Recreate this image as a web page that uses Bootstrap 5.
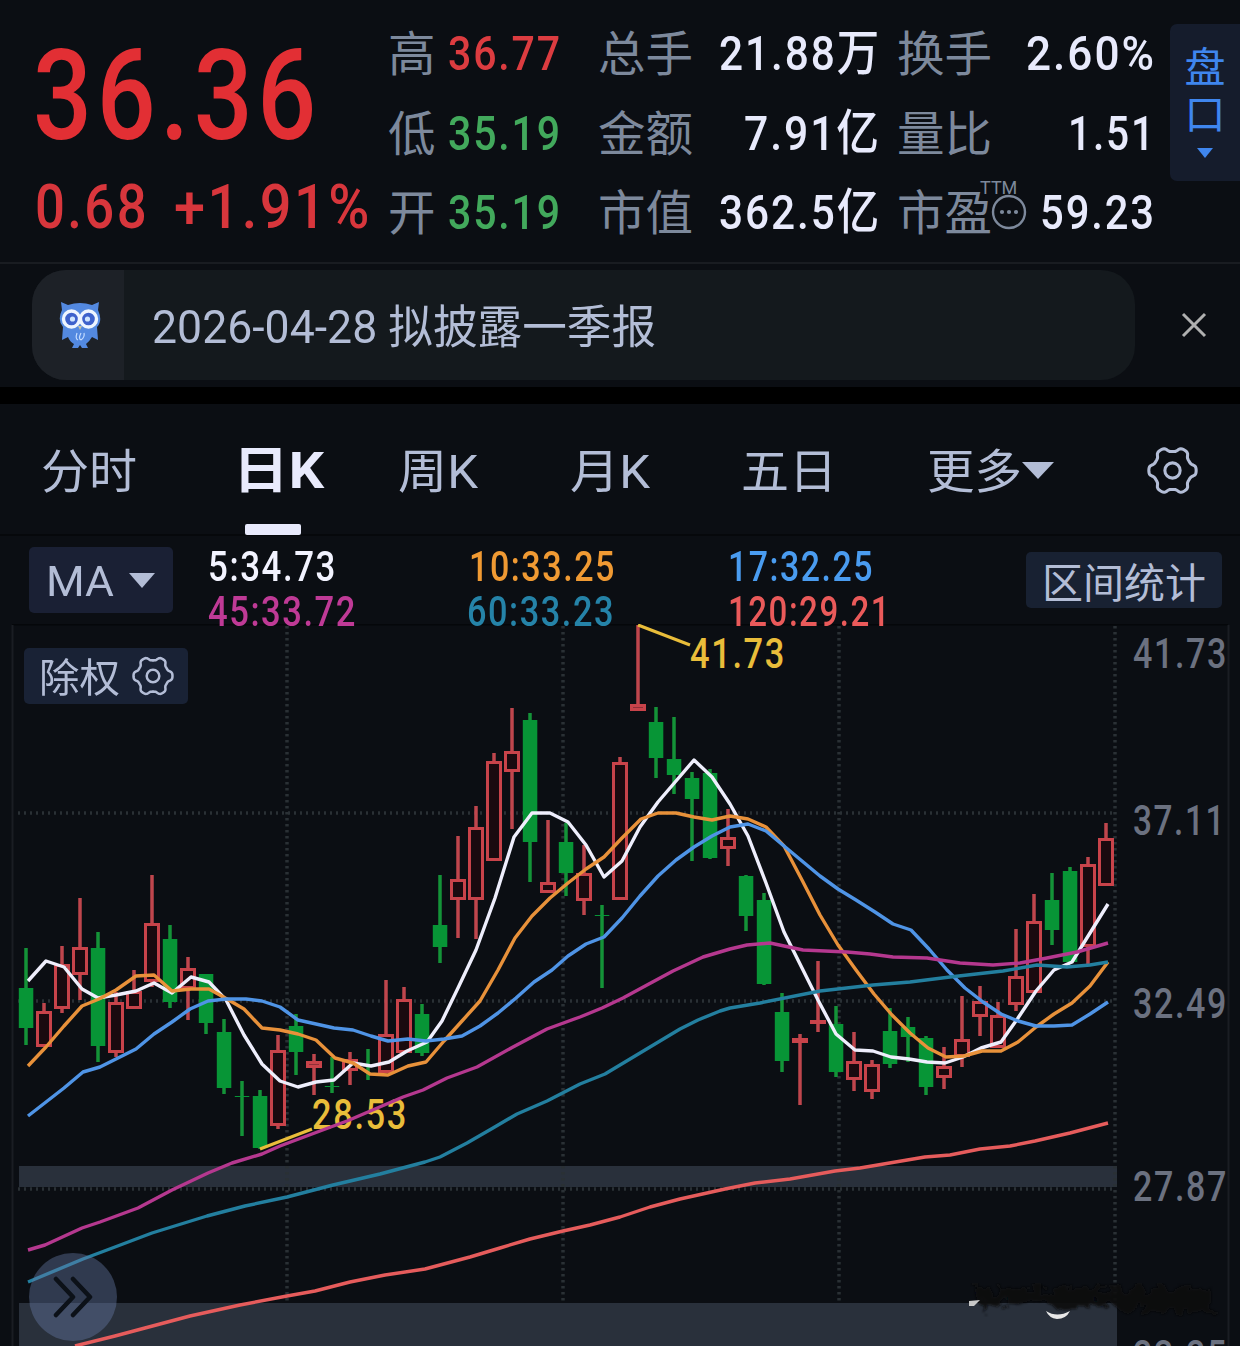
<!DOCTYPE html>
<html lang="zh-CN">
<head>
<meta charset="utf-8">
<meta name="viewport" content="width=device-width, initial-scale=1">
<title>日K</title>
<link rel="stylesheet" href="https://cdn.jsdelivr.net/npm/bootstrap@5.3.0/dist/css/bootstrap.min.css">
<style>
:root{--num:Roboto,"Noto Sans CJK SC",sans-serif;--ink:#e8eafc;--soft:#b3bdd6;--lbl:#7d899c;--up:#e22f34;--down:#42a95c}
body{width:1240px;height:1346px;margin:0;overflow:hidden;background:#0b0e13;color:var(--ink);font-family:var(--num);line-height:1}
.fit{display:inline-block;white-space:nowrap;transform-origin:0 50%}
.price-col .fit,.stat-col .fit,.ma-vals .fit{letter-spacing:.045em}
.quote{height:264px;border-bottom:2px solid #191c21}
.price-col{width:389px;padding:25px 0 0 33px}
.price-now{font-size:126px;line-height:142px;font-weight:500;color:var(--up)}
.price-chg{font-size:62px;line-height:80px;color:#d8363c;font-weight:500;padding-left:2px}
.price-chg .gap-chg{width:25px}
.stat-col{padding-top:14px}
.stat-row{height:79.5px;font-size:49px;font-weight:500}
.stat-row>span{flex-shrink:0}
.stat-row .lbl{font-size:47.5px;font-weight:400;color:var(--lbl);padding-top:4px}
.c1{width:60px}.c2{width:150px}.c3{width:118px}.c4{width:165px}.c5{width:145px}.c6{width:130px}
.stat-col .c1{margin-left:-1px}
.red{color:#dc3c40}.green{color:#42a95c}
.ttm{left:83px;top:-12px;font-size:18px;color:var(--lbl);font-weight:400}
.dots{left:94px;top:3px}
.side-tab{width:70px;height:157px;margin-top:24px;background:#151c2c;border-radius:7px 0 0 7px;color:#3f86ee;font-size:41px;padding-top:21px}
.side-tab span{line-height:47px}
.notice{height:123px;padding:6px 0 0 32px}
.pill{width:1103px;height:110px;border-radius:34px;background:#14191d;overflow:hidden}
.pill-ico{width:92px;padding-left:3px;background:#1d2127}
.pill-txt{font-size:46px;color:var(--soft);padding:4px 0 0 28px}
.close-x{width:105px;padding:0 0 8px 13px}
.divide{height:17px;background:#000}
.tabs{height:132px;font-size:47px;color:var(--soft);border-bottom:2px solid #06080b}
.tabs .tab{height:132px;padding-top:2px}
.t1{margin-left:41px}.t2{margin-left:96px}.t3{margin-left:74px}.t4{margin-left:92px}.t5{margin-left:91px}.t6{margin-left:90px}
.t7{margin-right:42px}
.tabs .t7{padding-top:0}
.tab.on{color:var(--ink);font-weight:700;font-size:50px}
.tab.on::after{content:"";position:absolute;left:12px;top:120px;width:56px;height:11px;background:var(--ink);border-radius:2px}
.ma-bar{height:88px;padding-left:29px;z-index:1}
.box-btn{background:#1a2034;border-radius:5px;color:var(--soft)}
.ma-btn{width:144px;height:66px;margin-top:11px;font-size:42px;padding-left:17px}
.ma-btn .fit{padding-top:4px}
.ma-btn svg{margin-left:15px}
.ma-vals{margin-left:35px;padding-top:8px;font-size:42px;font-weight:500}
.ma-vals .ma-line{height:45px;line-height:45px}
.v1{width:261px}.v2{width:259px}
.range-btn{width:196px;height:56px;margin:16px 18px 0 auto;padding-top:8px;font-size:41px;background:#182132}
.chart{height:722px}
.chart svg.plot{display:block}
.ex-btn{left:24px;top:24px;width:164px;height:56px;font-size:40px;background:#192235;padding-left:15px;gap:12px}
.ex-btn .fit{padding-top:6px}
.more-btn{left:29px;top:629px;width:88px;height:88px;border-radius:50%;background:rgba(105,125,170,.4)}
.plot text{font-family:var(--num);font-weight:500;font-size:42px;letter-spacing:2px}
</style>
</head>
<body>
<header class="quote d-flex">
  <div class="price-col flex-shrink-0">
    <div class="price-now"><span class="fit" data-w="288">36.36</span></div>
    <div class="price-chg d-flex"><span class="fit" data-w="114">0.68</span><span class="gap-chg"></span><span class="fit" data-w="198">+1.91%</span></div>
  </div>
  <div class="stat-col flex-shrink-0">
    <div class="stat-row d-flex align-items-center"><span class="c1 lbl">高</span><span class="c2 red"><span class="fit" data-w="114">36.77</span></span><span class="c3 lbl">总手</span><span class="c4 text-end"><span class="fit" data-w="162">21.88万</span></span><span class="c5 lbl ps-3">换手</span><span class="c6 text-end"><span class="fit" data-w="130">2.60%</span></span></div>
    <div class="stat-row d-flex align-items-center"><span class="c1 lbl">低</span><span class="c2 green"><span class="fit" data-w="114">35.19</span></span><span class="c3 lbl">金额</span><span class="c4 text-end"><span class="fit" data-w="137">7.91亿</span></span><span class="c5 lbl ps-3">量比</span><span class="c6 text-end"><span class="fit" data-w="88">1.51</span></span></div>
    <div class="stat-row d-flex align-items-center"><span class="c1 lbl">开</span><span class="c2 green"><span class="fit" data-w="114">35.19</span></span><span class="c3 lbl">市值</span><span class="c4 text-end"><span class="fit" data-w="162">362.5亿</span></span><span class="c5 lbl ps-3"><span class="position-relative d-inline-block">市盈<span class="ttm position-absolute">TTM</span><svg class="dots position-absolute" width="36" height="36" viewBox="0 0 36 36"><circle cx="18" cy="18" r="16" fill="none" stroke="#7d899c" stroke-width="2.4"/><g fill="#7d899c"><circle cx="11" cy="18" r="2.1"/><circle cx="18" cy="18" r="2.1"/><circle cx="25" cy="18" r="2.1"/></g></svg></span></span><span class="c6 text-end"><span class="fit" data-w="116">59.23</span></span></div>
  </div>
  <div class="side-tab ms-auto d-flex flex-column align-items-center"><span>盘</span><span>口</span><svg class="mt-2" width="16" height="12"><path d="M0 1H16L8 11Z" fill="#3f86ee"/></svg></div>
</header>

<section class="notice d-flex">
  <div class="pill d-flex">
    <div class="pill-ico d-flex align-items-center justify-content-center">
      <svg width="44" height="48" viewBox="0 0 44 48">
        <path d="M3 1 10 4Q22 0 34 4L41 1 40 9Q45 20 39 26L40 39 34 36Q31 41 28 43L30 47H24L22 44 20 47H14L16 43Q12 41 10 36L4 39 5 26Q-1 19 4 9Z" fill="#5389e0"/>
        <circle cx="13.500" cy="18" r="8" fill="#3d62cc" stroke="#edf5ff" stroke-width="3.400"/><circle cx="30.500" cy="18" r="8" fill="#3d62cc" stroke="#edf5ff" stroke-width="3.400"/>
        <circle cx="14.500" cy="18" r="2.600" fill="#cfe6ff"/><circle cx="29.500" cy="18" r="2.600" fill="#cfe6ff"/>
        <path d="M20 25H24L22 29Z" fill="#c6c6a8"/><path d="M19 32Q17 38 20 39M23 32Q20 38 23 39M26 32Q27 36 23 39" fill="none" stroke="#c4dcff" stroke-width="1.200"/>
      </svg>
    </div>
    <div class="pill-txt d-flex align-items-center"><span class="fit" data-w="504">2026-04-28 拟披露一季报</span></div>
  </div>
  <div class="close-x d-flex align-items-center justify-content-center"><svg width="26" height="26" viewBox="0 0 26 26"><path d="M2 2 24 24M24 2 2 24" stroke="#b0b0b0" stroke-width="3" fill="none"/></svg></div>
</section>
<div class="divide"></div>

<nav class="tabs d-flex">
  <div class="tab t1 d-flex align-items-center"><span class="fit" data-w="96">分时</span></div>
  <div class="tab t2 on position-relative d-flex align-items-center"><span class="fit" data-w="91">日K</span></div>
  <div class="tab t3 d-flex align-items-center"><span class="fit" data-w="80">周K</span></div>
  <div class="tab t4 d-flex align-items-center"><span class="fit" data-w="80">月K</span></div>
  <div class="tab t5 d-flex align-items-center"><span class="fit" data-w="96">五日</span></div>
  <div class="tab t6 d-flex align-items-center"><span class="fit" data-w="95">更多</span><svg width="32" height="18"><path d="M0 0H32L16 17Z" fill="#b3bdd6"/></svg></div>
  <div class="tab t7 d-flex align-items-center ms-auto"><svg width="51" height="51" viewBox="-25 -25 50 50"><use href="#gear"/></svg></div>
</nav>

<section class="ma-bar position-relative d-flex">
  <div class="ma-btn box-btn d-flex align-items-center"><span class="fit" data-w="68">MA</span><svg width="26" height="15"><path d="M0 0H26L13 15Z" fill="#b3bdd6"/></svg></div>
  <div class="ma-vals">
    <div class="ma-line d-flex"><span class="v1" style="color:#f2f3ff"><span class="fit" data-w="129">5:34.73</span></span><span class="v2" style="color:#f09a33"><span class="fit" data-w="147">10:33.25</span></span><span style="color:#4a9cf0"><span class="fit" data-w="146">17:32.25</span></span></div>
    <div class="ma-line d-flex"><span class="v2" style="color:#bf3a96"><span class="fit" data-w="149">45:33.72</span></span><span class="v1" style="color:#2583a8"><span class="fit" data-w="148">60:33.23</span></span><span style="color:#ea5a5a"><span class="fit" data-w="163">120:29.21</span></span></div>
  </div>
  <div class="range-btn box-btn d-flex align-items-center justify-content-center"><span class="fit" data-w="164">区间统计</span></div>
</section>

<main class="chart position-relative">
  <svg class="plot" id="plot" width="1240" height="722" viewBox="0 624 1240 722">
    <defs>
      <g id="gear" fill="none" stroke="#b3bdd6" stroke-width="3" stroke-linejoin="round"><path id="gearPath"/><circle r="7.500"/></g>
      <filter id="soft" x="-5%" y="-20%" width="110%" height="140%"><feTurbulence type="fractalNoise" baseFrequency=".09" numOctaves="3" seed="4" result="n"/><feDisplacementMap in="SourceGraphic" in2="n" scale="26"/><feGaussianBlur stdDeviation="1.2"/></filter>
    </defs>
    <path d="M12 624.500H1228" stroke="#05070a" stroke-width="2"/><path d="M12.500 625V1346M1228.500 625V1346" stroke="#1a1d23" stroke-width="2"/>
    <path d="M19 1166H1117V1187H19ZM19 1303H1117V1346H19Z" fill="#29303b"/>
    <path d="M287 626V1302M563 626V1302M839 626V1302M1115 626V1302" stroke="#2a3035" stroke-width="3.500" stroke-dasharray="2.500 3.500"/>
    <path d="M18 813H1116M18 1001H1116M18 1189H1116" stroke="#2a3035" stroke-width="3.500" stroke-dasharray="2 4"/>
    <g id="candles"></g>
    <g fill="#e9bd3a"><text x="690" y="668" textLength="96" lengthAdjust="spacingAndGlyphs">41.73</text><text x="312" y="1129" textLength="96" lengthAdjust="spacingAndGlyphs">28.53</text></g>
    <g id="lines" fill="none" stroke-width="3.400" stroke-linejoin="round"></g>
    <path d="M638 625 690 645M260 1149 312 1129" stroke="#e9bd3a" stroke-width="3.200"/>
    <g fill="#6b7180"><text x="1133" y="668" textLength="95" lengthAdjust="spacingAndGlyphs">41.73</text><text x="1133" y="835" textLength="93" lengthAdjust="spacingAndGlyphs">37.11</text><text x="1133" y="1018" textLength="95" lengthAdjust="spacingAndGlyphs">32.49</text><text x="1133" y="1201" textLength="95" lengthAdjust="spacingAndGlyphs">27.87</text><text x="1133" y="1370" textLength="95" lengthAdjust="spacingAndGlyphs">23.25</text></g>
    <path filter="url(#soft)" d="M974 1288H1212V1312H1122L1112 1304 1068 1306 1060 1312 1048 1303 990 1304 980 1310Z" fill="#0b0c0e" opacity=".9"/>
    <path d="M1046 1311Q1057 1318 1070 1311 1066 1319 1057 1319 1049 1318 1046 1311Z" fill="#e8e8e8"/><path d="M969 1301 980 1300 974 1306 969 1306Z" fill="#c8c8c8"/>
  </svg>
  <div class="ex-btn box-btn position-absolute d-flex align-items-center"><span class="fit" data-w="81">除权</span><svg width="42" height="42" viewBox="-25 -25 50 50"><use href="#gear"/></svg></div>
  <div class="more-btn position-absolute d-flex align-items-center justify-content-center"><svg width="40" height="42" viewBox="0 0 40 42"><path d="M3 3 20 21 3 39M20 3 37 21 20 39" fill="none" stroke="#0c1118" stroke-width="4.500" stroke-linecap="round" stroke-linejoin="round"/></svg></div>
</main>

<script src="https://cdn.jsdelivr.net/npm/bootstrap@5.3.0/dist/js/bootstrap.bundle.min.js"></script>
<script>
// Condense each text run to its column width
document.querySelectorAll('.fit').forEach(function(e){
  var n=e.getBoundingClientRect().width,w=+e.dataset.w;
  e.style.transform='scaleX('+w/n+')';e.style.marginRight=(w-n)+'px';
});
// Six-lobed settings gear
var g='',N=120;
for(var i=0;i<=N;i++){var a=i/N*2*Math.PI,c=Math.cos(6*a),r=20.9+2.3*Math.tanh(1.8*c)/Math.tanh(1.8);g+=(i?'L':'M')+(r*Math.cos(a)).toFixed(2)+' '+(r*Math.sin(a)).toFixed(2);}
document.getElementById('gearPath').setAttribute('d',g+'Z');
// Candles: direction, high, body top, body bottom, low
var C=`g 948 988 1028 1045|r 1003 1011 1047 1047|r 946 964 1009 1013|r 898 947 975 1000|g 932 948 1046 1062|r 992 1002 1053 1057|r 970 991 1009 1009|r 875 923 982 987|g 925 939 1002 1008|r 957 968 989 1020|g 974 974 1023 1034|g 1019 1032 1088 1094|g 1081 1096 1097 1136|g 1090 1096 1148 1149|r 1035 1050 1126 1129|g 1014 1026 1052 1075|r 1054 1061 1068 1095|g 1057 1086 1087 1093|r 1052 1059 1071 1085|g 1049 1065 1066 1080|r 980 1034 1073 1073|r 987 999 1053 1053|g 1004 1014 1053 1056|g 875 925 947 963|r 836 879 900 938|r 806 827 900 939|r 753 761 861 861|r 708 751 772 829|g 713 720 842 882|r 820 882 893 893|g 823 842 873 896|r 845 873 901 915|g 905 915 916 988|r 757 762 900 900|r 625 704 711 711|g 707 722 758 778|g 717 759 775 794|g 772 778 799 861|g 769 773 858 859|r 809 837 849 866|g 875 876 916 931|g 893 900 984 985|g 993 1012 1061 1072|r 1034 1038 1043 1105|r 961 1020 1024 1032|g 1006 1024 1072 1077|r 1032 1061 1080 1091|r 1060 1064 1092 1099|g 1008 1031 1064 1068|g 1017 1027 1037 1062|g 1036 1038 1087 1095|r 1047 1066 1078 1089|r 996 1039 1057 1067|r 986 1001 1017 1036|r 1002 1015 1048 1048|r 929 976 1005 1011|r 894 921 993 993|g 873 900 930 945|g 867 871 962 962|r 857 864 947 964|r 823 838 886 886`;
document.getElementById('candles').innerHTML=C.split('|').map(function(s,i){
  var p=s.split(' '),x=26+18*i,h=+p[1],t=+p[2],b=+p[3],l=+p[4];
  if(p[0]=='g')return '<path d="M'+x+' '+h+'V'+l+'" stroke="#149338" stroke-width="3.500"/><rect x="'+(x-7.2)+'" y="'+t+'" width="14.500" height="'+(b-t)+'" fill="#079536"/>';
  return '<path d="M'+x+' '+h+'V'+t+'M'+x+' '+b+'V'+l+'" stroke="#bf464d" stroke-width="3.500"/><rect x="'+(x-6.5)+'" y="'+(t+1.5)+'" width="13" height="'+Math.max(b-t-3,1)+'" fill="'+(b-t<9?'#8f2f38':'#1a0a0f')+'" stroke="#c8434a" stroke-width="3"/>';
}).join('');
// Moving averages: colour, points
var L=[
['#e65c5c','75,1346 115,1336 145,1328 190,1316 240,1305 287,1296 315,1291 350,1282 385,1275 425,1269 470,1257 500,1248 530,1239 563,1231 590,1225 620,1217 650,1207 680,1199 725,1189 755,1183 790,1179 835,1171 860,1168 925,1157 950,1155 980,1149 1010,1146 1035,1141 1070,1133 1108,1123'],
['#eeeefc','28,981 46,961 64,967 82,989 98,998 116,995 136,991 154,983 172,993 191,977 209,982 226,1000 244,1035 262,1064 280,1081 298,1087 316,1082 334,1080 353,1063 371,1066 389,1062 407,1051 427,1042 442,1021 458,988 476,950 495,898 514,837 532,813 550,813 568,822 586,845 604,877 622,861 640,827 658,802 676,781 694,760 712,777 730,804 748,836 766,883 784,932 802,968 818,1000 836,1034 855,1050 873,1051 891,1057 909,1059 927,1062 945,1063 963,1057 981,1048 1001,1042 1018,1018 1036,991 1054,970 1072,962 1090,933 1108,904'],
['#e8913a','28,1066 46,1047 64,1026 82,1006 99,999 116,990 136,976 154,975 172,991 191,989 209,989 227,999 244,1009 262,1028 280,1030 298,1034 316,1040 335,1058 353,1063 370,1074 388,1075 408,1066 426,1062 444,1041 462,1021 480,1001 498,970 515,938 532,916 550,898 568,883 586,869 604,857 622,838 641,819 658,813 676,813 694,817 712,820 730,816 748,819 766,827 784,846 802,880 820,915 838,945 856,970 874,994 892,1015 910,1033 928,1048 946,1057 964,1056 982,1051 1001,1051 1018,1042 1036,1027 1054,1014 1072,1003 1090,986 1108,962'],
['#4f94e6','28,1116 46,1102 64,1088 83,1072 100,1067 118,1058 136,1049 154,1034 172,1022 190,1009 208,1001 226,999 246,999 262,1001 280,1007 298,1020 316,1024 334,1028 353,1030 371,1036 388,1041 408,1039 426,1041 444,1039 462,1036 480,1026 498,1013 516,998 534,982 552,970 568,956 586,944 604,937 622,918 640,896 658,876 676,860 694,847 712,836 730,827 748,824 766,831 784,846 802,861 820,876 838,889 856,900 875,912 893,924 911,930 929,949 947,970 965,988 983,1002 1001,1014 1018,1021 1036,1026 1054,1026 1072,1025 1090,1014 1108,1002'],
['#b5388f','28,1250 45,1245 82,1228 100,1222 138,1208 172,1190 208,1173 232,1163 262,1154 280,1146 320,1131 347,1121 403,1097 423,1090 447,1078 477,1067 513,1047 547,1029 580,1017 602,1008 623,998 647,985 673,971 703,957 730,949 747,945 770,943 803,950 847,952 870,954 893,957 927,958 960,963 993,965 1020,963 1047,958 1077,952 1108,943'],
['#237f9f','28,1282 83,1259 115,1247 152,1233 207,1216 245,1206 287,1197 333,1185 380,1174 425,1162 440,1157 467,1143 493,1128 517,1114 547,1101 580,1084 605,1074 640,1053 680,1029 698,1020 720,1011 730,1008 760,1003 820,991 873,985 910,982 950,977 985,973 1003,971 1037,965 1067,967 1090,965 1108,962']];
document.getElementById('lines').innerHTML=L.map(function(l){return '<polyline stroke="'+l[0]+'" points="'+l[1]+'"/>'}).join('');
</script>
</body>
</html>
